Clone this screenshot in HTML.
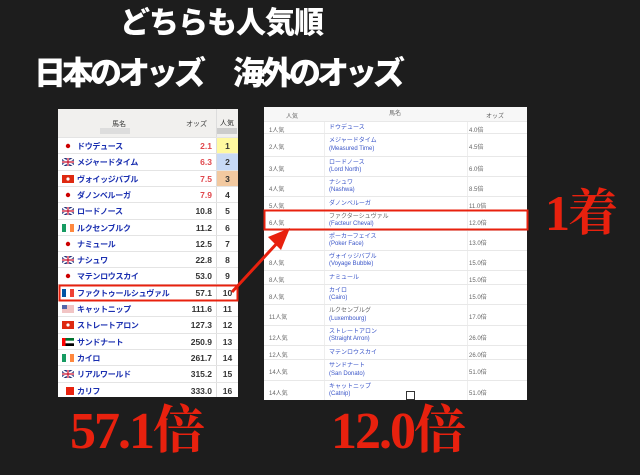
<!DOCTYPE html>
<html><head><meta charset="utf-8"><style>
*{margin:0;padding:0;box-sizing:border-box}
body{width:640px;height:475px;background:#1d1d1d;position:relative;overflow:hidden;font-family:"Liberation Sans","Noto Sans CJK JP",sans-serif}
.t{position:absolute;color:#fff;font-weight:900;font-family:"Noto Sans CJK JP",sans-serif;white-space:nowrap;line-height:1}
.r{position:absolute;color:#e8210e;font-weight:bold;font-family:"Liberation Serif","Noto Serif CJK SC",serif;white-space:nowrap;line-height:1}
#L{position:absolute;left:58px;top:109px;width:180px;height:288px;background:#fff;overflow:hidden}
#L .h{position:absolute;left:0;top:0;width:180px;height:28px;background:#f1f0ee;font-size:7px;color:#333}
#L .row{position:absolute;left:0;width:180px;height:16.3px;border-top:1px solid #e4e4e4;font-size:8px;font-weight:bold}
.nm{position:absolute;left:19px;top:3px;color:#1a2fb0;letter-spacing:-0.3px}
.od{position:absolute;right:26px;top:3px;color:#333;font-size:8.5px}
.nk{position:absolute;left:158px;width:22px;top:0;height:16px;text-align:center;padding-top:3px;color:#333;border-left:1px solid #ddd;font-size:8.5px}
.fl{position:absolute;left:4px;top:4px;width:12px;height:8px}
#R{position:absolute;left:264px;top:107px;width:263px;height:293px;background:#fff;font-size:6px;color:#666;overflow:hidden}
#R .row{position:absolute;left:0;width:263px;border-top:1px solid #e8e8e8}
#R .a{position:absolute;left:5px}
#R .b{position:absolute;left:65px;color:#3a55c8;line-height:7.5px}
#R .c{position:absolute;left:205px}
#R .v1{position:absolute;left:60px;top:0;bottom:0;border-left:1px solid #eee}
#R .v2{position:absolute;left:203px;top:0;bottom:0;border-left:1px solid #eee}
</style></head><body>
<div class="t" style="left:120px;top:5px;font-size:30px;letter-spacing:-1px">どちらも人気順</div>
<div class="t" style="left:34px;top:55px;font-size:32px;letter-spacing:-4px">日本のオッズ</div>
<div class="t" style="left:233px;top:55px;font-size:32px;letter-spacing:-4px">海外のオッズ</div>

<div id="L">
<div class="h"><span style="position:absolute;left:54px;top:10px">馬名</span><span style="position:absolute;left:42px;top:19px;width:30px;height:6px;background:#ddd"></span><span style="position:absolute;left:128px;top:10px">オッズ</span><span style="position:absolute;left:162px;top:9px">人気</span><span style="position:absolute;left:159px;top:19px;width:20px;height:6px;background:#ccc"></span><span style="position:absolute;left:158px;top:0;height:28px;border-left:1px solid #ddd"></span></div>
</div>

<div id="R">
<div class="row" style="top:0;height:14px;background:#f7f7f7;border:0"><span class="a" style="left:22px;top:4px">人気</span><span class="b" style="left:125px;top:4px;color:#666">馬名</span><span class="c" style="left:222px;top:4px">オッズ</span></div>
</div>

<svg style="position:absolute;left:0;top:0" width="640" height="475">
<rect x="59.5" y="285.5" width="178" height="15" fill="none" stroke="#e8210e" stroke-width="2"/>
<rect x="264.5" y="210.5" width="263" height="19" fill="none" stroke="#e8210e" stroke-width="2"/>
<line x1="232" y1="292" x2="280" y2="240" stroke="#e8210e" stroke-width="3"/>
<polygon points="290,228 268,237 281,250" fill="#e8210e"/>
<rect x="406.5" y="391.5" width="8" height="8" fill="#fff" stroke="#333"/>
</svg>

<div class="r" style="left:545px;top:188px;font-size:50px;letter-spacing:-2px">1着</div>
<div class="r" style="left:70px;top:406px;font-size:52px;letter-spacing:-2px">57.1倍</div>
<div class="r" style="left:331px;top:406px;font-size:52px;letter-spacing:-2px">12.0倍</div>

<script>
var L=[["ドウデュース","2.1","1","jp",1,"#fff9a0"],["メジャードタイム","6.3","2","gb",1,"#c8daf5"],["ヴォイッジバブル","7.5","3","hk",1,"#f2c9a0"],["ダノンベルーガ","7.9","4","jp",1,""],["ロードノース","10.8","5","gb",0,""],["ルクセンブルク","11.2","6","ie",0,""],["ナミュール","12.5","7","jp",0,""],["ナシュワ","22.8","8","gb",0,""],["マテンロウスカイ","53.0","9","jp",0,""],["ファクトゥールシュヴァル","57.1","10","fr",0,""],["キャットニップ","111.6","11","us",0,""],["ストレートアロン","127.3","12","hk",0,""],["サンドナート","250.9","13","ae",0,""],["カイロ","261.7","14","ie",0,""],["リアルワールド","315.2","15","gb",0,""],["カリフ","333.0","16","red",0,""]];
var F={jp:'<svg class="fl" viewBox="0 0 12 8"><rect width="12" height="8" fill="#fff"/><circle cx="6" cy="4" r="2.2" fill="#c00"/></svg>',
gb:'<svg class="fl" viewBox="0 0 12 8"><rect width="12" height="8" fill="#23317a"/><path d="M0 0L12 8M12 0L0 8" stroke="#fff" stroke-width="1.6"/><path d="M6 0V8M0 4H12" stroke="#fff" stroke-width="2.4"/><path d="M6 0V8M0 4H12" stroke="#c8102e" stroke-width="1.2"/></svg>',
hk:'<svg class="fl" viewBox="0 0 12 8"><rect width="12" height="8" fill="#de2910"/><circle cx="6" cy="4" r="1.6" fill="#fff"/></svg>',
ie:'<svg class="fl" viewBox="0 0 12 8"><rect width="4" height="8" fill="#169b62"/><rect x="4" width="4" height="8" fill="#fff"/><rect x="8" width="4" height="8" fill="#ff883e"/></svg>',
fr:'<svg class="fl" viewBox="0 0 12 8"><rect width="4" height="8" fill="#0055a4"/><rect x="4" width="4" height="8" fill="#fff"/><rect x="8" width="4" height="8" fill="#ef4135"/></svg>',
us:'<svg class="fl" viewBox="0 0 12 8"><rect width="12" height="8" fill="#e8a0a0"/><path d="M0 1H12M0 3H12M0 5H12M0 7H12" stroke="#fff" stroke-width="0.8"/><rect width="5" height="4" fill="#5566aa"/></svg>',
ae:'<svg class="fl" viewBox="0 0 12 8"><rect width="12" height="8" fill="#fff"/><rect width="12" height="2.7" fill="#00732f"/><rect y="5.3" width="12" height="2.7" fill="#000"/><rect width="3.5" height="8" fill="#f00"/></svg>',
red:'<svg class="fl" viewBox="0 0 12 8"><rect x="4" width="8" height="8" fill="#e8210e"/></svg>'};
var h="";L.forEach(function(r,i){h+='<div class="row" style="top:'+(28+i*16.3)+'px">'+F[r[3]]+'<span class="nm">'+r[0]+'</span><span class="od" style="color:'+(r[4]?'#e0474c':'#333')+'">'+r[1]+'</span><span class="nk" style="background:'+(r[5]||'#fff')+'">'+r[2]+'</span></div>';});
document.getElementById("L").innerHTML+=h;
var R=[["1人気","ドウデュース","","4.0倍",14,12],["2人気","メジャードタイム","(Measured Time)","4.5倍",26,23],["3人気","ロードノース","(Lord North)","6.0倍",49,20],["4人気","ナシュワ","(Nashwa)","8.5倍",69,20],["5人気","ダノンベルーガ","","11.0倍",89,14],["6人気","ファクターシュヴァル","(Facteur Cheval)","12.0倍",103,20],["","ポーカーフェイス","(Poker Face)","13.0倍",123,20],["8人気","ヴォイッジバブル","(Voyage Bubble)","15.0倍",143,20],["8人気","ナミュール","","15.0倍",163,14],["8人気","カイロ","(Cairo)","15.0倍",177,20],["11人気","ルクセンブルグ","(Luxembourg)","17.0倍",197,21],["12人気","ストレートアロン","(Straight Arron)","26.0倍",218,20],["12人気","マテンロウスカイ","","26.0倍",238,14],["14人気","サンドナート","(San Donato)","51.0倍",252,21],["14人気","キャットニップ","(Catnip)","51.0倍",273,20]];
var g="";R.forEach(function(r){var two=r[2]!="";var mid=(r[5]-7)/2;g+='<div class="row" style="top:'+r[4]+'px;height:'+r[5]+'px"><span class="v1"></span><span class="v2"></span><span class="a" style="top:'+mid+'px">'+r[0]+'</span><span class="b" style="top:'+(two?(r[5]-15)/2:mid)+'px'+(r[1]=="ファクターシュヴァル"||r[1]=="ルクセンブルグ"?';color:#666':'')+'">'+r[1]+(two?'<br><span style="color:#3a55c8">'+r[2]+'</span>':'')+'</span><span class="c" style="top:'+mid+'px">'+r[3]+'</span></div>';});
document.getElementById("R").innerHTML+=g;
</script>
</body></html>
